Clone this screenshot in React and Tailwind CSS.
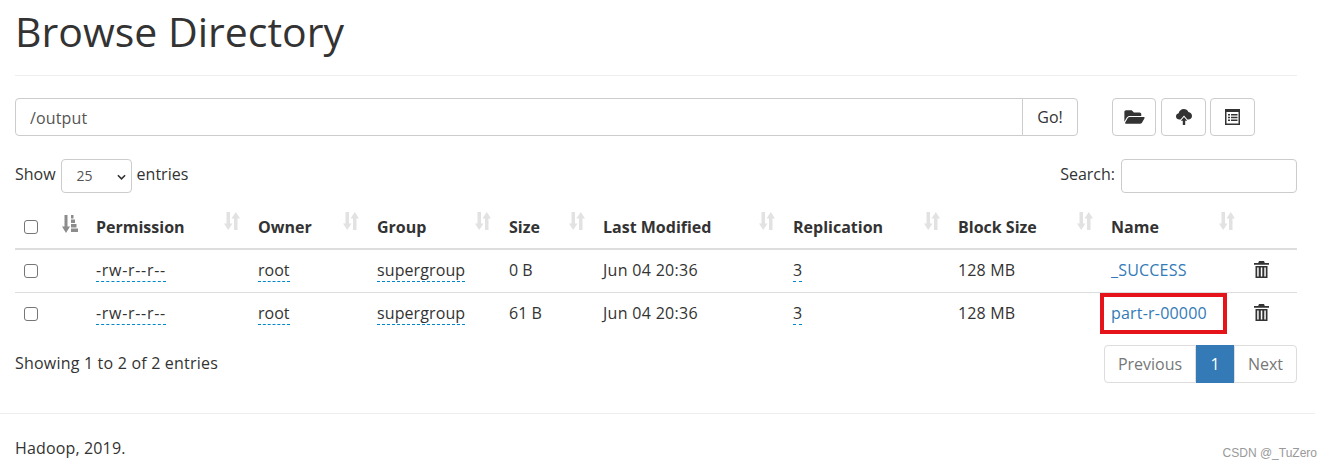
import { FaFolderOpen } from 'react-icons/fa';

const columns = [
  { label: 'Permission', width: 'w-[162px]' },
  { label: 'Owner', width: 'w-[119px]' },
  { label: 'Group', width: 'w-[132px]' },
  { label: 'Size', width: 'w-[94px]' },
  { label: 'Last Modified', width: 'w-[190px]' },
  { label: 'Replication', width: 'w-[165px]' },
  { label: 'Block Size', width: 'w-[153px]' },
  { label: 'Name', width: 'w-[142px]' },
];

const rows = [
  { size: '0 B', name: '_SUCCESS' },
  { size: '61 B', name: 'part-r-00000', marked: true },
];

const SortIcon = () => (
  <svg viewBox="0 0 16 18" className="w-[16px] h-[18px] text-[#e2e2e2]" fill="currentColor">
    <path d="M2.500 0h3.500v11.500h2.500L4.200 18 0 11.500h2.500zM10 18V6.500H7.500L11.800 0 16 6.500h-2.500V18z" />
  </svg>
);

const SortActive = () => (
  <svg viewBox="0 0 16 18" className="w-[16px] h-[18px] text-[#8c8c8c]" fill="currentColor">
    <path d="M2.500 0h3v11.500h2.500L4 18 0 11.500h2.500zM9 0h2.500v3.500H9zM9 4.500h4v3.500H9zM9 9h5.500v3.500H9zM9 13.500h7V17H9z" />
  </svg>
);

const TrashIcon = () => (
  <svg viewBox="0 0 15 17" className="w-[15px] h-[17px] text-[#333]" fill="currentColor">
    <path fillRule="evenodd" d="M5 0h5l.8 2H15v1.800H0V2h4.200zM1.500 5h12v12h-12zM3.200 6.500v9h1.500v-9zM6.800 6.500v9h1.500v-9zM10.300 6.500v9h1.500v-9z" />
  </svg>
);

const CloudIcon = () => (
  <svg viewBox="0 0 16 16" className="w-[16px] h-[16px] text-[#333]" fill="currentColor">
    <path d="M3.500 10.500C1.500 10.500 0 9.200 0 7.400 0 5.800 1.100 4.600 2.600 4.300 3.200 1.800 5.300 0 7.800 0c2.100 0 3.900 1.200 4.600 3 2 .2 3.600 1.900 3.600 3.900 0 2-1.600 3.600-3.600 3.600h-1L8 6.500 4.500 10.500z" />
    <path d="M8 8l3.200 3.800H9.200V16H6.800v-4.200H4.800z" />
  </svg>
);

const ListIcon = () => (
  <svg viewBox="0 0 15 16" className="w-[15px] h-[16px] text-[#333]" fill="currentColor">
    <path fillRule="evenodd" d="M0 0h15v16H0zM1.500 3v11.500h12V3zM3 5h2v1.500H3zM6 5h6.500v1.500H6zM3 7.700h2v1.500H3zM6 7.700h6.500v1.500H6zM3 10.400h2v1.500H3zM6 10.400h6.500v1.500H6z" />
  </svg>
);

const Checkbox = () => (
  <input type="checkbox" className="block w-[14px] h-[14px] m-0 appearance-none rounded-[3px] border border-[#767676] bg-white" />
);

const Dashed = ({ children, className = '' }) => (
  <span className={`border-b border-dashed border-[#0088cc] ${className}`}>{children}</span>
);

const ToolButton = ({ children, className }) => (
  <button className={`${className} h-[38px] flex items-center justify-center bg-white border border-[#cccccc] rounded-[4px]`}>
    {children}
  </button>
);

export default function App() {
  return (
    <div className="w-[1332px] h-[467px] relative overflow-hidden bg-white text-[#333] text-[16px] font-['Open_Sans','Noto_Sans',sans-serif]">
      <div className="w-[1312px] px-[15px]">
        <h1 className="pt-[4px] h-[71px] text-[41px] leading-[54px] text-[#333] border-b border-[#eeeeee] w-[1282px] box-content">
          Browse Directory
        </h1>

        {/* Path bar */}
        <div className="flex mt-[22px] w-[1282px]">
          <div className="flex w-[1063px]">
            <input
              readOnly
              value="/output"
              className="flex-1 h-[38px] px-[14px] pt-[2px] text-[16px] tracking-[0.15px] text-[#555] border border-[#cccccc] rounded-l-[4px] outline-none"
            />
            <button className="w-[56px] h-[38px] -ml-px bg-white border border-[#cccccc] rounded-r-[4px] text-[16px]">Go!</button>
          </div>
          <div className="flex ml-[34px]">
            <ToolButton className="w-[44px]"><FaFolderOpen className="w-[21px] h-[18px] text-[#333]" /></ToolButton>
            <ToolButton className="w-[45px] ml-[5px]"><CloudIcon /></ToolButton>
            <ToolButton className="w-[45px] ml-[4px]"><ListIcon /></ToolButton>
          </div>
        </div>

        {/* Length + search */}
        <div className="flex items-center justify-between mt-[23px] h-[34px] w-[1282px]">
          <div className="flex items-center gap-[5px]">
            <span className="-mt-[4px]">Show</span>
            <div className="relative w-[71px] h-[34px] pb-[2px] border border-[#cccccc] rounded-[4px] text-[14px] text-[#555] flex items-center pl-[15px]">
              25
              <svg viewBox="0 0 10 6" className="absolute right-[5px] top-[14px] w-[9px] h-[6px] text-[#333]" fill="none" stroke="currentColor" strokeWidth="1.800">
                <path d="M1 1l4 4 4-4" />
              </svg>
            </div>
            <span className="-mt-[4px]">entries</span>
          </div>
          <div className="flex items-center gap-[6px]">
            <span className="-mt-[4px]">Search:</span>
            <input className="w-[176px] h-[34px] border border-[#cccccc] rounded-[4px] outline-none" />
          </div>
        </div>

        {/* Listing */}
        <table className="mt-[12px] w-[1282px] table-fixed border-collapse">
          <thead>
            <tr className="h-[44px] border-b-2 border-[#dddddd]">
              <th className="w-[38px] pl-[9px] text-left font-normal"><Checkbox /></th>
              <th className="w-[35px] pl-[9px] pb-[6px] text-left font-normal"><SortActive /></th>
              {columns.map((col) => (
                <th key={col.label} className={`${col.width} pl-[8px] pr-[8px] text-left font-bold text-[16px]`}>
                  <div className="flex items-start justify-between pr-[2px]">
                    <span className="whitespace-nowrap">{col.label}</span>
                    <span className="-mt-[3px]"><SortIcon /></span>
                  </div>
                </th>
              ))}
              <th />
            </tr>
          </thead>
          <tbody>
            {rows.map((row) => (
              <tr key={row.name} className="h-[43px] border-b border-[#dddddd] last:border-b-0">
                <td className="pl-[9px]"><Checkbox /></td>
                <td />
                <td className="pl-[8px] pb-[1px]"><Dashed className="tracking-[0.7px]">-rw-r--r--</Dashed></td>
                <td className="pl-[8px] pb-[1px]"><Dashed>root</Dashed></td>
                <td className="pl-[8px] pb-[1px]"><Dashed className="tracking-[0.1px]">supergroup</Dashed></td>
                <td className="pl-[8px] pb-[1px]">{row.size}</td>
                <td className="pl-[8px] pb-[1px] tracking-[0.3px]">Jun 04 20:36</td>
                <td className="pl-[8px] pb-[1px]"><Dashed>3</Dashed></td>
                <td className="pl-[8px] pb-[1px] tracking-[0.15px]">128 MB</td>
                <td className="pl-[8px] pb-[1px] text-[#337ab7] tracking-[0.2px] whitespace-nowrap">
                  {row.marked ? (
                    <span className="-ml-[11px] inline-block border-[4px] border-[#e5141b] pl-[7px] pr-[16px] h-[41px] leading-[33px]">{row.name}</span>
                  ) : row.name}
                </td>
                <td className="pl-[9px] pb-[3px]"><TrashIcon /></td>
              </tr>
            ))}
          </tbody>
        </table>

        {/* Info + pagination */}
        <div className="flex items-start justify-between mt-[10px] w-[1282px]">
          <div className="mt-[6px] tracking-[0.2px]">Showing 1 to 2 of 2 entries</div>
          <div className="flex h-[38px]">
            <button className="w-[92px] h-full border border-[#dddddd] rounded-l-[4px] text-[#777]">Previous</button>
            <button className="w-[38px] h-full bg-[#337ab7] text-white">1</button>
            <button className="w-[63px] h-full border border-[#dddddd] rounded-r-[4px] text-[#777]">Next</button>
          </div>
        </div>
      </div>

      <div className="mt-[30px] w-[1315px] border-t border-[#eeeeee] pl-[15px] pt-[22px] tracking-[0.15px]">Hadoop, 2019.</div>
      <span className="absolute right-[15px] bottom-[5px] text-[12px] text-[#999] font-['Liberation_Sans',sans-serif]">CSDN @_TuZero</span>
    </div>
  );
}
